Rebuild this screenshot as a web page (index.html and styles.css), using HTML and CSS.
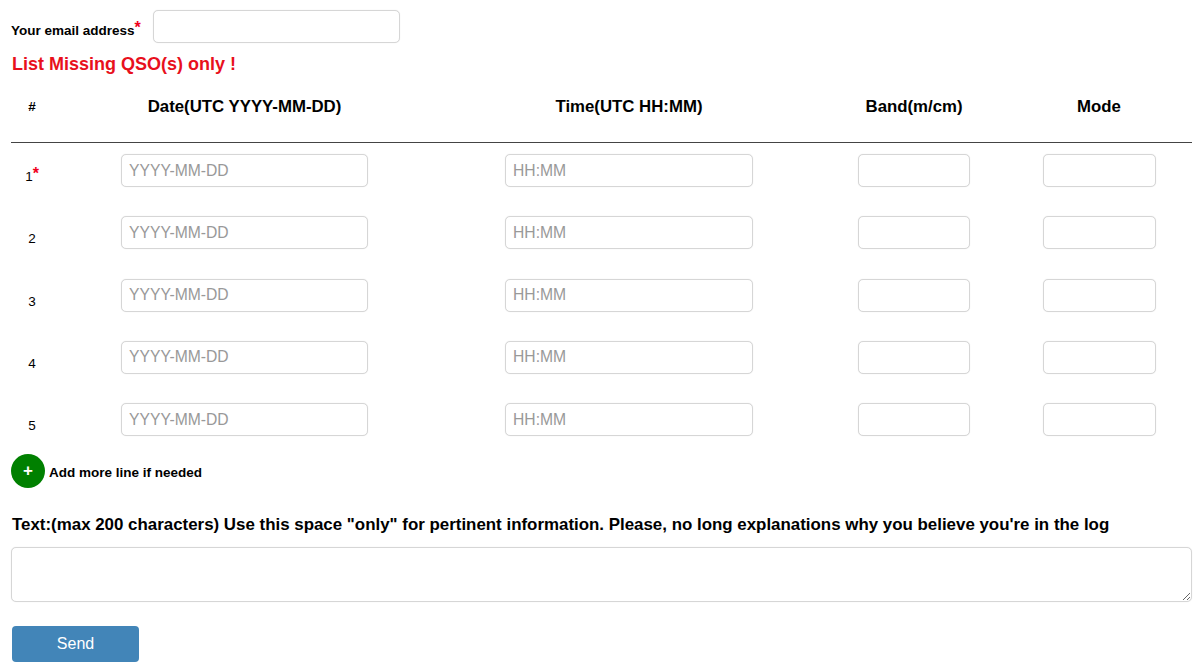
FILE: index.html
```html
<!DOCTYPE html>
<html lang="en">
<head>
    <meta charset="UTF-8">
    <meta name="viewport" content="width=device-width, initial-scale=1.0">
    <title>Missing QSO</title>
    <link rel="stylesheet" href="styles.css">
</head>
<body>
    <form class="form">
        <div class="email-row">
            <label for="email">Your email address<span class="req">*</span></label>
            <input type="text" id="email" class="field email">
        </div>
        <h2 class="warning">List Missing QSO(s) only !</h2>

        <div class="qso-table">
            <div class="qso-head">
                <div class="num-head">#</div>
                <div>Date(UTC YYYY-MM-DD)</div>
                <div>Time(UTC HH:MM)</div>
                <div>Band(m/cm)</div>
                <div>Mode</div>
            </div>
            <div class="qso-row">
                <div class="num">1<span class="req">*</span></div>
                <div><input type="text" class="field date" placeholder="YYYY-MM-DD"></div>
                <div><input type="text" class="field time" placeholder="HH:MM"></div>
                <div><input type="text" class="field band"></div>
                <div><input type="text" class="field mode"></div>
            </div>
            <div class="qso-row">
                <div class="num">2</div>
                <div><input type="text" class="field date" placeholder="YYYY-MM-DD"></div>
                <div><input type="text" class="field time" placeholder="HH:MM"></div>
                <div><input type="text" class="field band"></div>
                <div><input type="text" class="field mode"></div>
            </div>
            <div class="qso-row">
                <div class="num">3</div>
                <div><input type="text" class="field date" placeholder="YYYY-MM-DD"></div>
                <div><input type="text" class="field time" placeholder="HH:MM"></div>
                <div><input type="text" class="field band"></div>
                <div><input type="text" class="field mode"></div>
            </div>
            <div class="qso-row">
                <div class="num">4</div>
                <div><input type="text" class="field date" placeholder="YYYY-MM-DD"></div>
                <div><input type="text" class="field time" placeholder="HH:MM"></div>
                <div><input type="text" class="field band"></div>
                <div><input type="text" class="field mode"></div>
            </div>
            <div class="qso-row">
                <div class="num">5</div>
                <div><input type="text" class="field date" placeholder="YYYY-MM-DD"></div>
                <div><input type="text" class="field time" placeholder="HH:MM"></div>
                <div><input type="text" class="field band"></div>
                <div><input type="text" class="field mode"></div>
            </div>
        </div>

        <div class="add-row">
            <button type="button" class="add-btn">+</button>
            <span class="add-text">Add more line if needed</span>
        </div>

        <label class="text-label" for="text">Text:(max 200 characters) Use this space "only" for pertinent information. Please, no long explanations why you believe you're in the log</label>
        <textarea id="text" class="field comment"></textarea>

        <button type="submit" class="send">Send</button>
    </form>
</body>
</html>
```

FILE: styles.css
```css
html, body {
    margin: 0;
    padding: 0;
    background-color: white;
    font-family: "Liberation Sans", Arial, sans-serif;
    color: black;
}

.form {
    width: 1181px;
    margin-left: 11px;
    padding-top: 10px;
}

.req {
    color: #f0001c;
    font-size: 16px;
    font-weight: bold;
    line-height: 0;
    position: relative;
    top: -2px;
}

.field {
    box-sizing: border-box;
    height: 33px;
    padding: 0 7px;
    background-color: white;
    border: 1px solid #d6d6d6;
    border-radius: 5px;
    font-family: "Liberation Sans", Arial, sans-serif;
    font-size: 15.7px;
    box-shadow: 0 0 1px rgba(0, 0, 0, 0.12);
}

.field::placeholder {
    color: #999;
    opacity: 1;
}

.email-row {
    display: flex;
    align-items: center;
    height: 33px;
}

.email-row label {
    width: 142px;
    font-size: 13.5px;
    font-weight: bold;
    padding-top: 8px;
}

.email {
    width: 247px;
}

.warning {
    margin: 10px 0 0 1px;
    color: #e8101c;
    font-size: 18px;
    line-height: 22px;
}

.qso-head, .qso-row {
    display: grid;
    grid-template-columns: 42px 383px 386px 184px 186px;
    text-align: center;
}

.qso-head {
    box-sizing: border-box;
    height: 65px;
    padding-top: 19px;
    margin-top: 3px;
    font-size: 16.8px;
    line-height: 20px;
    font-weight: bold;
    border-bottom: 1px solid #444;
}

.num-head {
    font-size: 13.5px;
}

.qso-row {
    height: 62.3px;
}

.qso-head + .qso-row {
    margin-top: 11px;
}

.num {
    font-size: 13.5px;
    padding-top: 15px;
}

.date {
    width: 247px;
}

.time {
    width: 248px;
}

.band {
    width: 112.5px;
}

.mode {
    width: 113px;
}

.add-row {
    display: flex;
    align-items: center;
    gap: 4px;
    margin-top: -11px;
    font-size: 13.5px;
    font-weight: bold;
}

.add-text {
    padding-top: 2px;
}

.add-btn {
    width: 34px;
    height: 34px;
    padding: 0;
    background-color: green;
    color: white;
    border: none;
    border-radius: 50%;
    font-family: "Liberation Sans", Arial, sans-serif;
    font-size: 17px;
    font-weight: bold;
}

.text-label {
    display: block;
    margin: 26px 0 0 1px;
    font-size: 16.9px;
    line-height: 22px;
    font-weight: bold;
}

.comment {
    display: block;
    width: 100%;
    height: 55px;
    margin-top: 11px;
}

.send {
    display: block;
    width: 127px;
    height: 36px;
    margin: 24px 0 0 1px;
    background-color: #4285b8;
    color: white;
    border: none;
    border-radius: 4px;
    font-family: "Liberation Sans", Arial, sans-serif;
    font-size: 16px;
}
```
